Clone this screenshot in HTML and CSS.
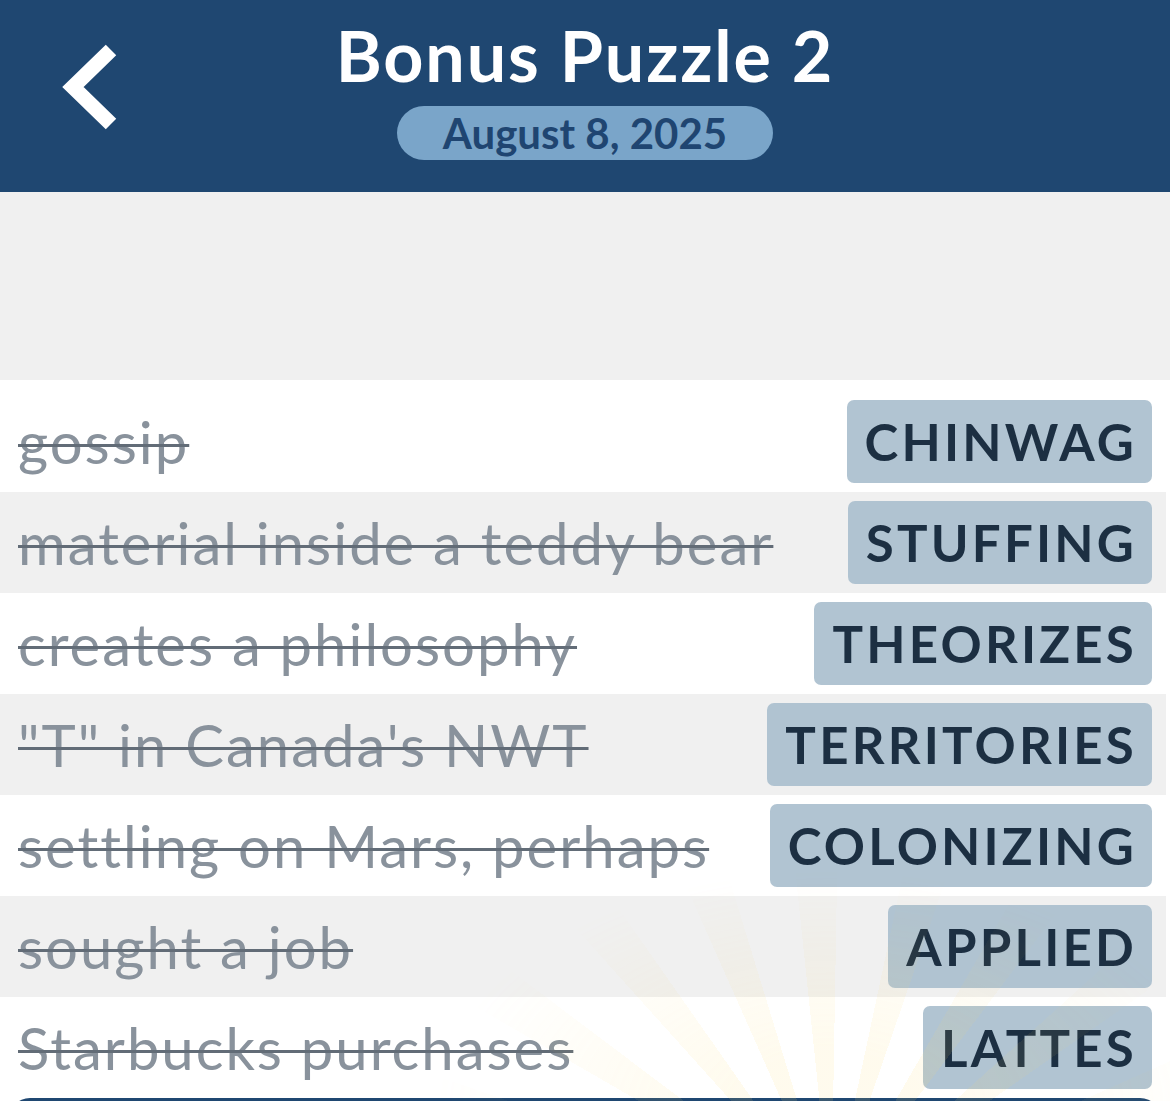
FILE: index.html
```html
<!DOCTYPE html>
<html lang="en">
<head>
  <meta charset="UTF-8">
  <meta name="viewport" content="width=device-width, initial-scale=1.0">
  <title>Bonus Puzzle 2</title>
  <link rel="stylesheet" href="styles.css">
</head>
<body>
  <header class="topbar">
    <button class="back-btn" aria-label="Back">
      <svg width="60" height="90" viewBox="0 0 60 90">
        <polyline points="53,8 15,45 53,82" fill="none" stroke="#fff" stroke-width="15" stroke-linejoin="miter" stroke-linecap="butt"/>
      </svg>
    </button>
    <div class="title-block">
      <h1>Bonus Puzzle 2</h1>
      <div class="date-pill">August 8, 2025</div>
    </div>
    <div></div>
  </header>

  <div class="board-space"></div>

  <section class="clue-list">
    <div class="rays"></div>
    <div class="clue-row">
      <span class="clue">gossip</span>
      <span class="answer">CHINWAG</span>
    </div>
    <div class="clue-row">
      <span class="clue">material inside a teddy bear</span>
      <span class="answer">STUFFING</span>
    </div>
    <div class="clue-row">
      <span class="clue">creates a philosophy</span>
      <span class="answer">THEORIZES</span>
    </div>
    <div class="clue-row">
      <span class="clue">"T" in Canada's NWT</span>
      <span class="answer">TERRITORIES</span>
    </div>
    <div class="clue-row">
      <span class="clue">settling on Mars, perhaps</span>
      <span class="answer">COLONIZING</span>
    </div>
    <div class="clue-row">
      <span class="clue">sought a job</span>
      <span class="answer">APPLIED</span>
    </div>
    <div class="clue-row">
      <span class="clue">Starbucks purchases</span>
      <span class="answer">LATTES</span>
    </div>
  </section>

  <div class="next-card"></div>
</body>
</html>
```

FILE: styles.css
```css
* {
    margin: 0;
    padding: 0;
    box-sizing: border-box;
}

body {
    font-family: 'Lato', 'Open Sans', sans-serif;
    background: #fff;
    overflow: hidden;
}

.topbar {
    height: 192px;
    background: #1f4771;
    display: grid;
    grid-template-columns: 1fr auto 1fr;
    padding-top: 20px;
}

.back-btn {
    background: none;
    border: none;
    width: 60px;
    height: 90px;
    margin: 22px 0 0 58px;
    cursor: pointer;
}

.back-btn svg {
    display: block;
}

.title-block {
    display: flex;
    flex-direction: column;
    align-items: center;
}

h1 {
    font-size: 70px;
    line-height: 70px;
    font-weight: 700;
    color: #fff;
    letter-spacing: 1.9px;
}

.date-pill {
    margin-top: 16px;
    height: 54px;
    line-height: 54px;
    padding: 0 46px;
    border-radius: 27px;
    background: #7aa5c9;
    color: #1f4571;
    font-size: 42px;
    font-weight: 700;
}

.board-space {
    height: 188px;
    background: #f0f0f0;
}

.clue-list {
    position: relative;
    background: #fff;
    padding: 11px 4px 0 0;
}

.clue-row {
    height: 101px;
    display: flex;
    align-items: center;
    justify-content: space-between;
    padding: 0 14px 0 18px;
}

.clue-row:nth-child(odd) {
    background: rgba(238, 238, 238, 0.9);
}

.clue {
    font-size: 58px;
    letter-spacing: 2px;
    color: #89929c;
    text-decoration: line-through;
    text-decoration-color: #626c77;
    text-decoration-thickness: 3px;
    white-space: nowrap;
}

.answer {
    height: 83px;
    line-height: 83px;
    padding: 0 15px 0 18px;
    border-radius: 7px;
    background: rgba(170, 191, 206, 0.92);
    color: #1c2f42;
    font-size: 51px;
    font-weight: 700;
    letter-spacing: 3.2px;
}

/* faint sun rays behind the last rows */
.rays {
    position: absolute;
    left: 400px;
    right: 0;
    bottom: -10px;
    height: 260px;
    background: repeating-conic-gradient(from 300deg at 56% 140%, rgba(255, 220, 110, 0.12) 0deg 7deg, transparent 7deg 18deg);
    -webkit-mask-image: radial-gradient(ellipse at 56% 100%, #000 15%, transparent 65%);
    mask-image: radial-gradient(ellipse at 56% 100%, #000 15%, transparent 65%);
    pointer-events: none;
}

.next-card {
    height: 60px;
    margin: 0 8px;
    border-radius: 22px 22px 0 0;
    background: #1f4771;
}
```
